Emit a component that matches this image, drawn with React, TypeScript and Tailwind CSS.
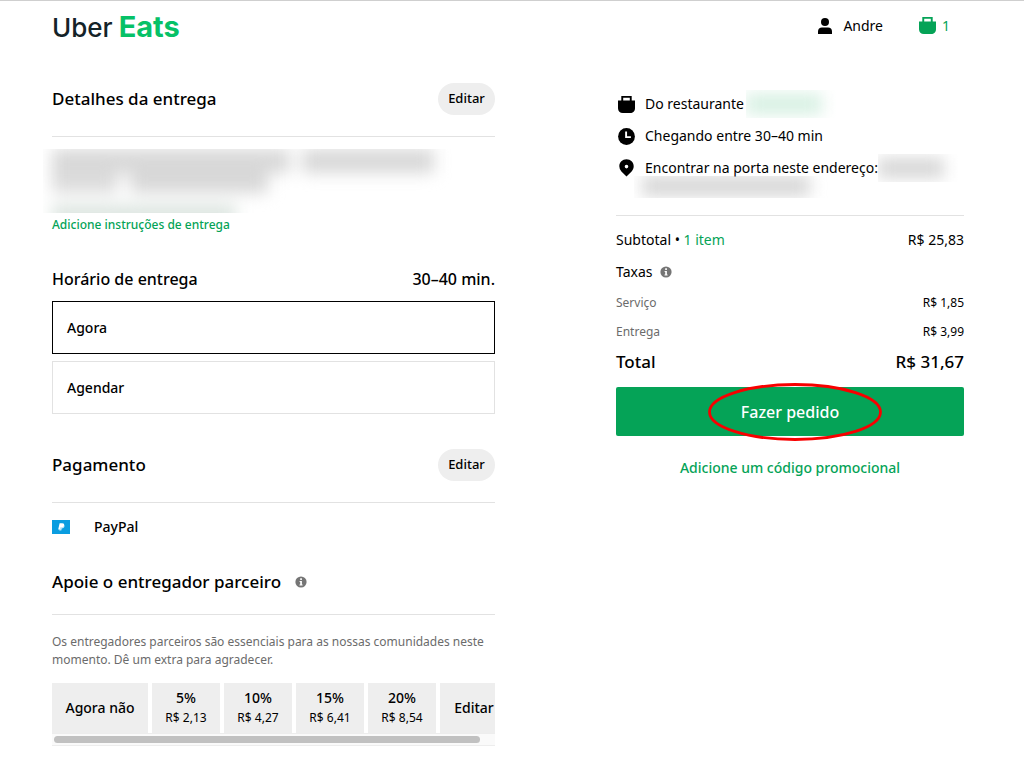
import type { ReactNode } from 'react'

interface Tip {
  percent: string
  amount: string
}

const TIPS: Tip[] = [
  { percent: '5%', amount: 'R$ 2,13' },
  { percent: '10%', amount: 'R$ 4,27' },
  { percent: '15%', amount: 'R$ 6,41' },
  { percent: '20%', amount: 'R$ 8,54' },
]

const FEES = [
  { label: 'Serviço', value: 'R$ 1,85' },
  { label: 'Entrega', value: 'R$ 3,99' },
]

function PersonIcon() {
  return (
    <svg viewBox="0 0 14 16" className="h-4 w-3.5" fill="currentColor" aria-hidden="true">
      <circle cx="7" cy="4" r="4" />
      <path d="M0 16v-2.5C0 11 1.6 9.5 4 9.5h6c2.4 0 4 1.5 4 4V16z" />
    </svg>
  )
}

function BagIcon() {
  return (
    <svg viewBox="0 0 17 17" className="h-[17px] w-[17px]" fill="currentColor" aria-hidden="true">
      <path
        fillRule="evenodd"
        d="M3.3 0h10.4v4.4H17v7.8c0 2.8-2 4.8-4.8 4.8H4.8C2 17 0 15 0 12.2V4.4h3.3zM5.2 1.7v2.7h6.6V1.7z"
      />
    </svg>
  )
}

function ClockIcon() {
  return (
    <svg viewBox="0 0 17 17" className="h-[17px] w-[17px]" aria-hidden="true">
      <circle cx="8.5" cy="8.5" r="8.4" fill="currentColor" />
      <path d="M8.1 3.5v5.6h4.8" fill="none" stroke="white" strokeWidth="1.9" />
    </svg>
  )
}

function PinIcon() {
  return (
    <svg viewBox="0 0 17 18" className="h-[18px] w-[17px]" fill="currentColor" aria-hidden="true">
      <path
        fillRule="evenodd"
        d="M8.5.3c4.1 0 7.2 3 7.2 7 0 2-.8 3.8-2.1 5.1l-5.1 5.2-5.1-5.2a7.2 7.2 0 0 1-2.1-5.1c0-4 3.1-7 7.2-7zm0 5.5a1.8 1.8 0 1 0 0 3.6 1.8 1.8 0 0 0 0-3.6z"
      />
    </svg>
  )
}

function InfoIcon() {
  return (
    <svg viewBox="0 0 12 12" className="h-3 w-3" aria-hidden="true">
      <circle cx="6" cy="6" r="5.6" fill="#757575" />
      <path d="M5.2 2.3h1.7v1.6H5.2zM4.6 4.9h2.3v3.5h.7v1.2H4.5V8.4h.7V6h-.6z" fill="white" />
    </svg>
  )
}

function PayPalIcon() {
  return (
    <svg viewBox="0 0 18 14" className="h-3.5 w-[18px]" aria-hidden="true">
      <path d="M0 0h18v14H0z" fill="#0a9de0" />
      <path d="M8.1 4.2h3c1.3.3 1.7 1.3 1.3 2.6-.4 1.2-1.3 1.6-2.6 1.6l-.5 2.2H7.2z" fill="#b9e3f7" />
      <path d="M7.6 3.2h2.7c1.5 0 2.1.9 1.8 2-.3 1.4-1.3 2-2.7 2H8.3L7.8 9.6H6.2z" fill="white" />
    </svg>
  )
}

function EditButton({ label }: { label: string }) {
  return (
    <button
      type="button"
      aria-label={label}
      className="h-8 w-[57px] rounded-full bg-[#eeeeee] text-[13px] font-medium"
    >
      Editar
    </button>
  )
}

interface SectionTitleProps {
  title: string
  icon?: ReactNode
  action?: ReactNode
}

function SectionTitle({ title, icon, action }: SectionTitleProps) {
  return (
    <div
      className={`flex items-center justify-between border-b border-[#e2e2e2] ${action ? 'pb-[21px]' : 'pb-4'}`}
    >
      <div className="flex h-8 items-center gap-3.5">
        <h2 className="text-[17px] font-medium">{title}</h2>
        {icon}
      </div>
      {action}
    </div>
  )
}

function TimeOption({ label, defaultChecked }: { label: string; defaultChecked?: boolean }) {
  return (
    <label className="flex h-[53px] cursor-pointer items-center border border-[#e2e2e2] px-3.5 text-sm font-medium has-checked:border-black">
      <input
        type="radio"
        name="delivery-time"
        defaultChecked={defaultChecked}
        className="w-0 appearance-none"
      />
      {label}
    </label>
  )
}

function Header() {
  return (
    <header className="flex h-[49px] items-center justify-between">
      <a
        href="#"
        className="flex items-baseline gap-1.5 pt-1 font-['Inter',sans-serif] leading-[48px] text-[#142328]"
      >
        <span className="text-[26px] font-medium">Uber</span>
        <span className="text-[29px] font-bold text-[#06c167]">Eats</span>
      </a>
      <div className="flex items-center pr-3.5">
        <a href="#" className="flex items-center gap-[11px] text-sm">
          <PersonIcon />
          Andre
        </a>
        <a href="#" className="ml-9 flex items-center gap-1.5 text-sm text-[#05a357]">
          <BagIcon />
          1
        </a>
      </div>
    </header>
  )
}

function DeliveryForm() {
  return (
    <div className="min-w-0">
      <section>
        <SectionTitle
          title="Detalhes da entrega"
          action={<EditButton label="Editar detalhes da entrega" />}
        />
        {/* Address is masked */}
        <div className="mt-3 -ml-[9px] h-16 overflow-hidden pl-[9px]">
          <div className="flex flex-col blur-[8px]">
            <div className="flex gap-3">
              <div className="h-6 w-[238px] bg-[#d8d8d8]" />
              <div className="h-6 w-[132px] bg-[#d8d8d8]" />
            </div>
            <div className="flex gap-3">
              <div className="h-5 w-[66px] bg-[#dcdcdc]" />
              <div className="h-5 w-[138px] bg-[#d8d8d8]" />
            </div>
            <div className="mt-3 h-5 w-[184px] bg-[#dbe4df]" />
          </div>
        </div>
        <a href="#" className="mt-0.5 block text-xs leading-5 font-medium text-[#05a357]">
          Adicione instruções de entrega
        </a>
      </section>

      <section role="radiogroup" aria-labelledby="delivery-time-title" className="mt-8">
        <div className="flex items-center justify-between text-base leading-6 font-medium">
          <h3 id="delivery-time-title">Horário de entrega</h3>
          <span>30–40 min.</span>
        </div>
        <div className="mt-2.5 flex flex-col gap-[7px]">
          <TimeOption label="Agora" defaultChecked />
          <TimeOption label="Agendar" />
        </div>
      </section>

      <section className="mt-[35px]">
        <SectionTitle title="Pagamento" action={<EditButton label="Editar pagamento" />} />
        <div className="mt-3.5 flex items-center gap-6 text-sm font-medium">
          <PayPalIcon />
          PayPal
        </div>
      </section>

      <section className="mt-[29px]">
        <SectionTitle title="Apoie o entregador parceiro" icon={<InfoIcon />} />
        <p className="mt-[18px] text-xs leading-[18px] text-[#6b6b6b]">
          Os entregadores parceiros são essenciais para as nossas comunidades neste momento. Dê um
          extra para agradecer.
        </p>
        <div className="mt-3.5 flex gap-1 overflow-x-auto [scrollbar-width:none]">
          <button type="button" className="h-[50px] w-24 shrink-0 bg-[#eeeeee] text-sm font-medium">
            Agora não
          </button>
          {TIPS.map((tip) => (
            <button
              key={tip.percent}
              type="button"
              className="flex h-[50px] w-[68px] shrink-0 flex-col items-center justify-center bg-[#eeeeee]"
            >
              <span className="text-sm leading-5 font-medium">{tip.percent}</span>
              <span className="text-xs leading-5">{tip.amount}</span>
            </button>
          ))}
          <button type="button" className="h-[50px] w-[68px] shrink-0 bg-[#eeeeee] text-sm font-medium">
            Editar
          </button>
        </div>
        <div className="flex h-[13px] items-center border-y border-[#ededed] bg-[#fafafa] px-0.5">
          <div className="h-[7px] w-[97%] rounded-full bg-[#c1c1c1]" />
        </div>
      </section>
    </div>
  )
}

function OrderSummary() {
  return (
    <aside className="min-w-0 pt-[5px] text-sm">
      <ul className="flex flex-col">
        <li className="flex h-8 items-center gap-2.5 pl-0.5">
          <BagIcon />
          <span>Do restaurante</span>
          <span className="-ml-2 h-7 w-[90px] overflow-hidden py-1">
            <span className="block h-5 w-[76px] bg-[#d6f0e2] blur-[8px]" />
          </span>
        </li>
        <li className="flex h-8 items-center gap-2.5 pl-0.5">
          <ClockIcon />
          Chegando entre 30–40 min
        </li>
        <li className="flex h-8 items-center gap-2.5 pl-0.5">
          <PinIcon />
          <span className="whitespace-nowrap">Encontrar na porta neste endereço:</span>
          <span className="-ml-2.5 h-7 w-20 overflow-hidden py-1">
            <span className="block h-5 w-[66px] bg-[#d6d6d6] blur-[8px]" />
          </span>
        </li>
      </ul>
      <div className="-mt-2 ml-[18px] h-[22px] w-[196px] overflow-hidden">
        <div className="ml-2 h-5 w-[168px] bg-[#d6d6d6] blur-[8px]" />
      </div>

      <dl className="mt-[17px] border-t border-[#e2e2e2] pt-2">
        <div className="flex h-8 items-center justify-between">
          <dt>
            Subtotal • <span className="text-[#05a357]">1 item</span>
          </dt>
          <dd>R$ 25,83</dd>
        </div>
        <div className="flex h-8 items-center gap-2">
          <dt>Taxas</dt>
          <dd>
            <InfoIcon />
          </dd>
        </div>
        {FEES.map((fee) => (
          <div key={fee.label} className="flex h-[29px] items-center justify-between text-xs">
            <dt className="text-[#6b6b6b]">{fee.label}</dt>
            <dd>{fee.value}</dd>
          </div>
        ))}
        <div className="flex h-8 items-center justify-between text-[17px] font-medium">
          <dt>Total</dt>
          <dd>R$ 31,67</dd>
        </div>
      </dl>

      <div className="relative mt-[9px]">
        <button
          type="button"
          className="block h-[49px] w-full rounded-xs bg-[#05a357] text-base font-medium text-white"
        >
          Fazer pedido
        </button>
        <svg
          viewBox="0 0 174 58"
          className="pointer-events-none absolute -top-1 left-[92px] h-[58px] w-[174px]"
          aria-hidden="true"
        >
          <ellipse cx="87" cy="29" rx="85.5" ry="27.5" fill="none" stroke="#f80000" strokeWidth="2.8" />
        </svg>
      </div>
      <a href="#" className="mt-[22px] block text-center text-sm font-medium text-[#05a357]">
        Adicione um código promocional
      </a>
    </aside>
  )
}

export default function App() {
  return (
    <div className="border-t border-[#cfcfcf] bg-white pr-[60px] pl-[52px] font-['Noto_Sans',sans-serif] text-black">
      <Header />
      <main className="mt-[33px] grid grid-cols-[443fr_348fr] gap-[121px]">
        <DeliveryForm />
        <OrderSummary />
      </main>
    </div>
  )
}
